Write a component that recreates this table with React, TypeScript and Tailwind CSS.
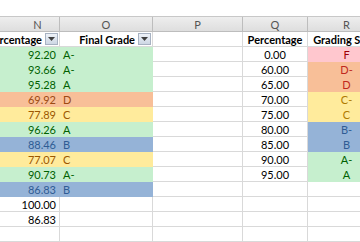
type Tone = "green" | "orange" | "yellow" | "blue" | "pink" | "none";

// left table: score + letter grade
const scores: { pct: string; grade: string; tone: Tone }[] = [
  { pct: "92.20", grade: "A-", tone: "green" },
  { pct: "93.66", grade: "A-", tone: "green" },
  { pct: "95.28", grade: "A", tone: "green" },
  { pct: "69.92", grade: "D", tone: "orange" },
  { pct: "77.89", grade: "C", tone: "yellow" },
  { pct: "96.26", grade: "A", tone: "green" },
  { pct: "88.46", grade: "B", tone: "blue" },
  { pct: "77.07", grade: "C", tone: "yellow" },
  { pct: "90.73", grade: "A-", tone: "green" },
  { pct: "86.83", grade: "B", tone: "blue" },
  { pct: "100.00", grade: "", tone: "none" },
  { pct: "86.83", grade: "", tone: "none" },
  { pct: "", grade: "", tone: "none" },
];

// right table: cut-off percentages
const scale: { min: string; grade: string; tone: Tone }[] = [
  { min: "0.00", grade: "F", tone: "pink" },
  { min: "60.00", grade: "D-", tone: "orange" },
  { min: "65.00", grade: "D", tone: "orange" },
  { min: "70.00", grade: "C-", tone: "yellow" },
  { min: "75.00", grade: "C", tone: "yellow" },
  { min: "80.00", grade: "B-", tone: "blue" },
  { min: "85.00", grade: "B", tone: "blue" },
  { min: "90.00", grade: "A-", tone: "green" },
  { min: "95.00", grade: "A", tone: "green" },
  { min: "", grade: "", tone: "none" },
  { min: "", grade: "", tone: "none" },
  { min: "", grade: "", tone: "none" },
  { min: "", grade: "", tone: "none" },
];

const fill: Record<Tone, string> = {
  green: "bg-[#c6efce] border-[#c6efce] text-[#006100]",
  orange: "bg-[#f8bf98] border-[#f8bf98] text-[#9c4a12]",
  yellow: "bg-[#ffeb9c] border-[#ffeb9c] text-[#9c5700]",
  blue: "bg-[#95b3d7] border-[#95b3d7] text-[#2f5c94]",
  pink: "bg-[#ffc7ce] border-[#ffc7ce] text-[#9c0006]",
  none: "bg-white border-[#d9d9d9] text-black",
};

// grading scale letters use a redder tone on the orange band
const scaleFill: Record<Tone, string> = {
  ...fill,
  orange: "bg-[#f8bf98] border-[#f8bf98] text-[#c0281e]",
  yellow: "bg-[#ffeb9c] border-[#ffeb9c] text-[#b07a00]",
};

const cols = "grid grid-cols-[60px_93px_90px_65px_78px]";
const cell = "h-[15px] border-r border-b flex items-center whitespace-nowrap overflow-hidden";

function FilterButton() {
  return (
    <span className="shrink-0 w-[13px] h-[12px] border border-[#a7b2c2] bg-linear-to-b from-[#eef2f8] to-[#cdd7e4] flex items-center justify-center">
      <svg width="7" height="4" viewBox="0 0 7 4">
        <path d="M0 0h7L3.5 4z" fill="#3f3f3f" />
      </svg>
    </span>
  );
}

export default function App() {
  return (
    <div
      className="w-[360px] h-[242px] overflow-hidden bg-white text-[11px] leading-none"
      style={{ fontFamily: "Lato, 'Liberation Sans', sans-serif" }}
    >
      <div className="h-[17px] border-b border-[#c8c8c8] bg-white" />

      {/* column letters */}
      <div className={`${cols} bg-linear-to-b from-[#eeeeee] to-[#dddddd] text-[#555]`}>
        <div className="h-[15px] border-r border-b border-[#bdbdbd] flex items-center justify-center pl-[16px]">N</div>
        <div className="h-[15px] border-r border-b border-[#bdbdbd] flex items-center justify-center">O</div>
        <div className="h-[15px] border-r border-b border-[#bdbdbd] flex items-center justify-center">P</div>
        <div className="h-[15px] border-r border-b border-[#bdbdbd] flex items-center justify-center">Q</div>
        <div className="h-[15px] border-r border-b border-[#bdbdbd] flex items-center justify-center">R</div>
      </div>

      {/* header row */}
      <div className={`${cols} font-bold text-black`}>
        <div className={`${cell} border-[#d9d9d9] justify-end gap-[3px] pr-[1px]`}>
          <span className="shrink-0">Percentage</span>
          <FilterButton />
        </div>
        <div className={`${cell} border-[#d9d9d9] justify-end gap-[3px] pr-[1px]`}>
          <span className="shrink-0">Final Grade</span>
          <FilterButton />
        </div>
        <div className={`${cell} border-[#d9d9d9]`} />
        <div className={`${cell} border-[#d9d9d9] justify-center`}>Percentage</div>
        <div className={`${cell} border-[#d9d9d9] justify-center overflow-visible`}>Grading Scale</div>
      </div>

      {scores.map((row, i) => {
        const s = scale[i];
        return (
          <div key={i} className={cols}>
            <div className={`${cell} ${fill[row.tone]} justify-end pr-[3px]`}>{row.pct}</div>
            <div className={`${cell} ${fill[row.tone]} pl-[3px]`}>{row.grade}</div>
            <div className={`${cell} ${fill.none}`} />
            <div className={`${cell} ${fill.none} justify-center`}>{s.min}</div>
            <div className={`${cell} ${scaleFill[s.tone]} justify-center`}>{s.grade}</div>
          </div>
        );
      })}
    </div>
  );
}
